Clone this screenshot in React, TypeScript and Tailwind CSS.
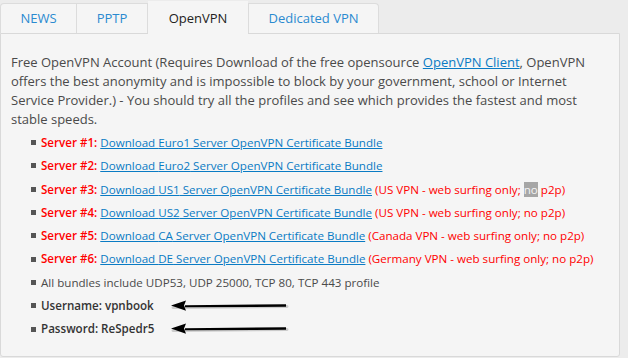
import React from "react";

const Arrow = () => (
  <svg width="124" height="16" viewBox="0 0 124 16" className="ml-[13px] shrink-0">
    <path d="M6 9.5 L120 8.5" stroke="#9a9a9a" strokeWidth="3" opacity="0.45" strokeLinecap="round" />
    <path d="M18 7.2 L119 6.3 L119 8.7 L18 9.3 Z" fill="#000" />
    <path d="M4 7.6 L19 2.5 L17 7.6 L19 12.7 Z" fill="#000" />
  </svg>
);

const Bullet = () => <span className="inline-block w-[5px] h-[5px] bg-[#555] mr-[5px] shrink-0" />;

const servers = [
  { n: 1, name: "Euro1", note: null },
  { n: 2, name: "Euro2", note: null },
  { n: 3, name: "US1", note: "US" },
  { n: 4, name: "US2", note: "US4" },
  { n: 5, name: "CA", note: "Canada" },
  { n: 6, name: "DE", note: "Germany" },
];

export default function App() {
  const font = { fontFamily: '"Open Sans", sans-serif' };
  return (
    <div className="w-[628px] h-[358px] bg-[#ececec] overflow-hidden text-[13px]" style={font}>
      <div className="flex items-end h-[33px]">
        <div className="w-[77px] h-[30px] flex items-center justify-center text-[#2a8ad0] bg-[#f5f5f5] border border-b-0 border-[#dcdcdc] rounded-tl-[4px]">NEWS</div>
        <div className="w-[71px] h-[30px] flex items-center justify-center text-[#2a8ad0] bg-[#f5f5f5] border border-l-0 border-b-0 border-[#dcdcdc]">PPTP</div>
        <div className="w-[100px] h-[33px] flex items-center justify-center pt-[2px] text-[#222] bg-[#f5f5f5] relative z-10 mb-[-1px]">OpenVPN</div>
        <div className="w-[131px] h-[30px] flex items-center justify-center text-[#2a8ad0] bg-[#f5f5f5] border border-b-0 border-[#dcdcdc] rounded-tr-[4px]">Dedicated VPN</div>
      </div>
      <div className="w-[620px] h-[324px] bg-[#f5f5f5] border border-[#d9d9d9] rounded-b-[3px] pl-[10px] pr-[8px] pt-[19px] text-[#4a4a4a]">
        <p className="leading-[19px]">
          Free OpenVPN Account (Requires Download of the free opensource{" "}
          <span className="text-[#0a7bc4] underline">OpenVPN Client</span>, OpenVPN offers the best anonymity and is impossible to block by your government, school or Internet Service Provider.) - You should try all the profiles and see which provides the fastest and most stable speeds.
        </p>
        <ul className="mt-[2px] pl-[20px] text-[11.6px] flex flex-col">
          {servers.map((s) => (
            <li key={s.n} className="h-[23.3px] flex items-center whitespace-pre">
              <Bullet />
              <span className="text-[#ff0000] font-semibold">Server #{s.n}: </span>
              <span className="text-[#0a7bc4] underline">Download {s.name} Server OpenVPN Certificate Bundle</span>
              {s.note === "US" && (
                <span className="text-[#ff0000]"> (US VPN - web surfing only; <span className="bg-[#a6a6a6] text-[#f4f4f4]">no</span> p2p)</span>
              )}
              {s.note === "US4" && <span className="text-[#ff0000]"> (US VPN - web surfing only; no p2p)</span>}
              {s.note === "Canada" && <span className="text-[#ff0000]"> (Canada VPN - web surfing only; no p2p)</span>}
              {s.note === "Germany" && <span className="text-[#ff0000]"> (Germany VPN - web surfing only; no p2p)</span>}
            </li>
          ))}
          <li className="h-[23.3px] flex items-center"><Bullet />All bundles include UDP53, UDP 25000, TCP 80, TCP 443 profile</li>
          <li className="h-[23.3px] flex items-center font-semibold text-[#333]">
            <Bullet />Username: vpnbook
            <Arrow />
          </li>
          <li className="h-[23.3px] flex items-center font-semibold text-[#333]">
            <Bullet />Password: ReSpedr5
            <Arrow />
          </li>
        </ul>
      </div>
    </div>
  );
}
